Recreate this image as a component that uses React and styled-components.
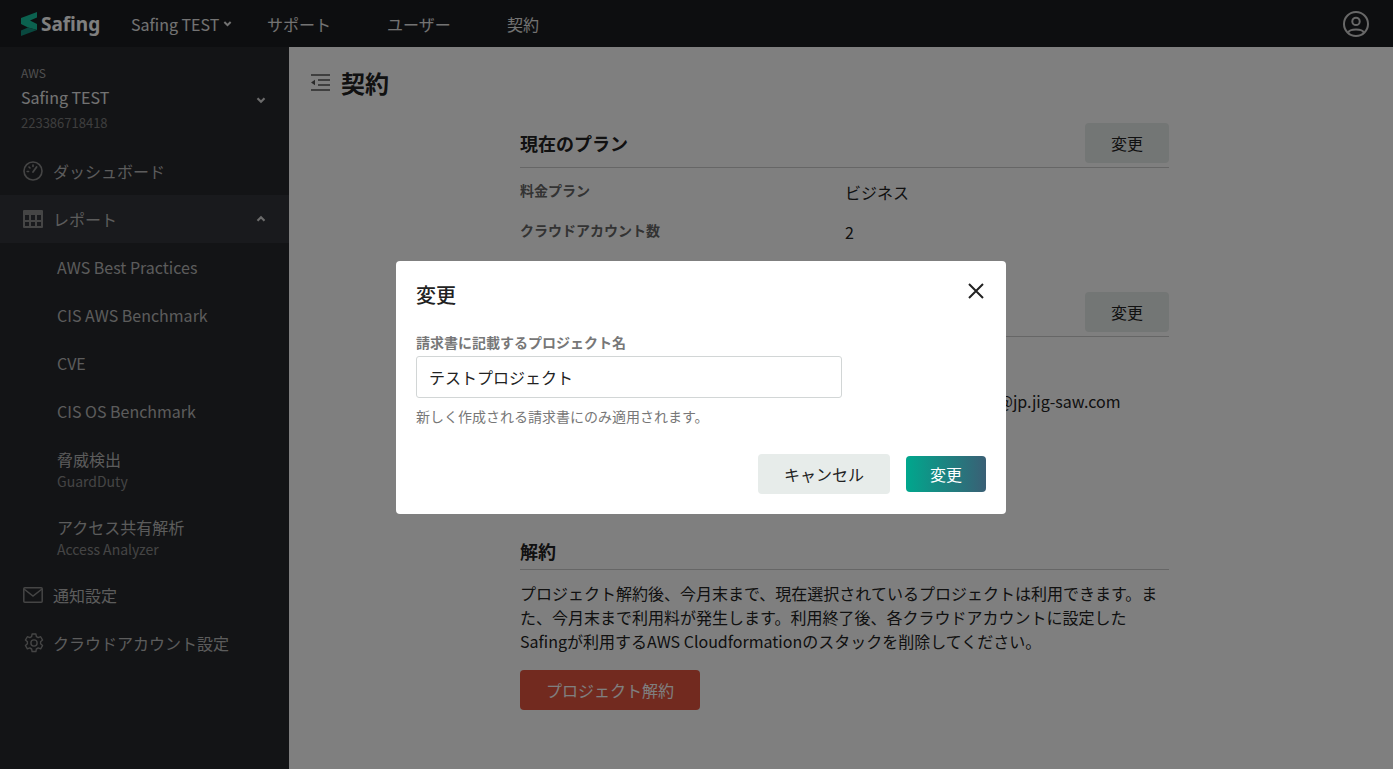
import React from "react";
import styled, { createGlobalStyle } from "styled-components";

const FONT = `"Noto Sans CJK JP", "Noto Sans", sans-serif`;

const GlobalStyle = createGlobalStyle`
  * {
    box-sizing: border-box;
  }
  html,
  body {
    margin: 0;
    height: 100%;
    overflow: hidden;
    background: #fff;
    font-family: ${FONT};
    color: #222;
  }
`;

function Logo() {
  return (
    <svg width="16" height="24" viewBox="0 0 16 24">
      <path d="M16 0 L16 5.5 L9 8.5 L16 12 L16 18 L7 15.5 L0 12 L0 6 Z" fill="#17c29e" />
      <path d="M0 18.5 L7 15.5 L16 18 L0 24 Z" fill="#12907e" />
    </svg>
  );
}

function Gauge() {
  return (
    <svg width="20" height="20" viewBox="0 0 20 20" fill="none" stroke="currentColor" strokeWidth="1.6">
      <circle cx="10" cy="10" r="9" />
      <path d="M10 11 L13.6 6" strokeLinecap="round" strokeWidth="1.8" />
      <path d="M4.2 10.5 H5.6 M6 6 L7 7 M10 4 V5.4" strokeLinecap="round" />
    </svg>
  );
}

function TableIcon() {
  return (
    <svg width="20" height="18" viewBox="0 0 20 18">
      <path
        fillRule="evenodd"
        fill="currentColor"
        d="M1 0 H19 A1 1 0 0 1 20 1 V17 A1 1 0 0 1 19 18 H1 A1 1 0 0 1 0 17 V1 A1 1 0 0 1 1 0 Z M2 5 V10 H6 V5 Z M8 5 V10 H12 V5 Z M14 5 V10 H18 V5 Z M2 12 V16 H6 V12 Z M8 12 V16 H12 V12 Z M14 12 V16 H18 V12 Z"
      />
    </svg>
  );
}

function Mail() {
  return (
    <svg width="20" height="16" viewBox="0 0 20 16" fill="none" stroke="currentColor" strokeWidth="1.5">
      <rect x="0.8" y="0.8" width="18.4" height="14.4" rx="1" />
      <path d="M1 2 L10 9 L19 2" />
    </svg>
  );
}

function Gear() {
  return (
    <svg width="22" height="22" viewBox="0 0 24 24" fill="none" stroke="currentColor" strokeWidth="1.5" strokeLinejoin="round">
      <path d="M9.9 2.2 h4.2 l.5 2.8 a7.6 7.6 0 0 1 2 1.15 l2.65-1 2.1 3.65-2.2 1.8 a7.6 7.6 0 0 1 0 2.3 l2.2 1.8-2.1 3.65-2.65-1 a7.6 7.6 0 0 1-2 1.15 l-.5 2.8 h-4.2 l-.5-2.8 a7.6 7.6 0 0 1-2-1.15 l-2.65 1-2.1-3.65 2.2-1.8 a7.6 7.6 0 0 1 0-2.3 l-2.2-1.8 2.1-3.65 2.65 1 a7.6 7.6 0 0 1 2-1.15 Z" />
      <circle cx="12" cy="12" r="3.4" />
    </svg>
  );
}

function Chevron({ up, size = 10 }) {
  return (
    <svg width={size} height={size} viewBox="0 0 10 10" fill="none" stroke="currentColor" strokeWidth="2.2">
      <path d={up ? "M1.5 6.8 L5 3.3 L8.5 6.8" : "M1.5 3.3 L5 6.8 L8.5 3.3"} />
    </svg>
  );
}

function UserCircle() {
  return (
    <svg width="26" height="26" viewBox="0 0 26 26" fill="none" stroke="currentColor" strokeWidth="2">
      <circle cx="13" cy="13" r="12" />
      <circle cx="13" cy="10.4" r="3.7" />
      <path d="M5.2 21.6 C7 17.6 19 17.6 20.8 21.6" />
    </svg>
  );
}

function Outdent() {
  return (
    <svg width="19" height="17" viewBox="0 0 19 17" fill="none" stroke="currentColor" strokeWidth="1.6">
      <path d="M0 1 H19 M7 6 H19 M7 11 H19 M0 16 H19" />
      <path d="M0 8.5 L4 5.8 V11.2 Z" fill="currentColor" stroke="none" />
    </svg>
  );
}

function CloseIcon() {
  return (
    <svg width="16" height="16" viewBox="0 0 16 16" fill="none" stroke="#222" strokeWidth="2">
      <path d="M1 1 L15 15 M15 1 L1 15" />
    </svg>
  );
}

const reports = [
  { name: "AWS Best Practices" },
  { name: "CIS AWS Benchmark" },
  { name: "CVE" },
  { name: "CIS OS Benchmark" },
  { name: "脅威検出", sub: "GuardDuty" },
  { name: "アクセス共有解析", sub: "Access Analyzer" },
];

export default function App() {
  return (
    <Page>
      <GlobalStyle />
      <TopBar>
        <Brand>
          <Logo />
          <BrandName>Safing</BrandName>
        </Brand>
        <ProjectMenu>
          Safing TEST
          <Chevron size={9} />
        </ProjectMenu>
        <TopLink>サポート</TopLink>
        <TopLink>ユーザー</TopLink>
        <TopLink>契約</TopLink>
        <UserButton>
          <UserCircle />
        </UserButton>
      </TopBar>
      <Body>
        <SideBar>
          <Account>
            <AccountType>AWS</AccountType>
            <AccountRow>
              <AccountName>Safing TEST</AccountName>
              <Chevron />
            </AccountRow>
            <AccountId>223386718418</AccountId>
          </Account>
          <NavItem>
            <NavIcon>
              <Gauge />
            </NavIcon>
            ダッシュボード
          </NavItem>
          <NavItem $active>
            <NavIcon>
              <TableIcon />
            </NavIcon>
            レポート
            <NavChevron>
              <Chevron up />
            </NavChevron>
          </NavItem>
          {reports.map((item) => (
            <SubItem key={item.name} $tall={!!item.sub}>
              <span>{item.name}</span>
              {item.sub && <SubCaption>{item.sub}</SubCaption>}
            </SubItem>
          ))}
          <NavItem>
            <NavIcon>
              <Mail />
            </NavIcon>
            通知設定
          </NavItem>
          <NavItem>
            <NavIcon>
              <Gear />
            </NavIcon>
            クラウドアカウント設定
          </NavItem>
        </SideBar>
        <Main>
          <TitleRow>
            <Outdent />
            <Title>契約</Title>
          </TitleRow>
          <Content>
            <SectionHead>
              <SectionTitle>現在のプラン</SectionTitle>
              <GrayButton>変更</GrayButton>
            </SectionHead>
            <PlanRows>
              <InfoRow>
                <InfoLabel>料金プラン</InfoLabel>
                <InfoValue>ビジネス</InfoValue>
              </InfoRow>
              <InfoRow>
                <InfoLabel>クラウドアカウント数</InfoLabel>
                <InfoValue>2</InfoValue>
              </InfoRow>
            </PlanRows>
            <SectionHead>
              <span />
              <GrayButton>変更</GrayButton>
            </SectionHead>
            <MailRow>
              <InfoLabel />
              <InfoValue>safing-billing-test-01@jp.jig-saw.com</InfoValue>
            </MailRow>
            <PlainHead>
              <SectionTitle>解約</SectionTitle>
            </PlainHead>
            <Notice>
              プロジェクト解約後、今月末まで、現在選択されているプロジェクトは利用できます。また、今月末まで利用料が発生します。利用終了後、各クラウドアカウントに設定したSafingが利用するAWS
              Cloudformationのスタックを削除してください。
            </Notice>
            <DangerButton>プロジェクト解約</DangerButton>
          </Content>
        </Main>
      </Body>
      <Overlay>
        <Modal>
          <ModalHead>
            <ModalTitle>変更</ModalTitle>
            <CloseButton>
              <CloseIcon />
            </CloseButton>
          </ModalHead>
          <FieldLabel>請求書に記載するプロジェクト名</FieldLabel>
          <TextInput readOnly value="テストプロジェクト" />
          <Hint>新しく作成される請求書にのみ適用されます。</Hint>
          <ModalFoot>
            <CancelButton>キャンセル</CancelButton>
            <SubmitButton>変更</SubmitButton>
          </ModalFoot>
        </Modal>
      </Overlay>
    </Page>
  );
}

const Page = styled.div`
  width: 100%;
  height: 100vh;
  display: flex;
  flex-direction: column;
  overflow: hidden;
`;
const TopBar = styled.header`
  height: 47px;
  flex: none;
  background: #1b1c20;
  color: #fff;
  display: flex;
  align-items: center;
  padding-left: 21px;
`;
const Brand = styled.div`
  display: flex;
  align-items: center;
  gap: 4px;
  width: 110px;
`;
const BrandName = styled.span`
  font-family: "Noto Sans", sans-serif;
  font-size: 19px;
  font-weight: 700;
  color: #fff;
`;
const ProjectMenu = styled.div`
  display: flex;
  align-items: center;
  gap: 4px;
  width: 136px;
  font-size: 16px;
  color: #e6e6e6;
`;
const TopLink = styled.div`
  width: 120px;
  font-size: 16px;
  color: #e6e6e6;
`;
const UserButton = styled.div`
  margin-left: auto;
  margin-right: 24px;
  display: flex;
  color: #d0d0d0;
`;
const Body = styled.div`
  flex: 1;
  display: flex;
  min-height: 0;
`;
const SideBar = styled.aside`
  width: 289px;
  flex: none;
  background: #27292d;
  color: #d6d6d6;
`;
const Account = styled.div`
  padding: 16px 21px 0;
  height: 100px;
`;
const AccountType = styled.div`
  font-size: 12px;
  line-height: 20px;
  color: #a0a0a0;
`;
const AccountRow = styled.div`
  display: flex;
  align-items: center;
  justify-content: space-between;
  padding-right: 2px;
  height: 28px;
  margin-bottom: 2px;
  font-size: 16px;
  svg {
    margin-top: 6px;
  }
`;
const AccountName = styled.span`
  color: #e6e6e6;
`;
const AccountId = styled.div`
  font-size: 13px;
  line-height: 20px;
  color: #7c7c7c;
`;
const NavItem = styled.div`
  height: 48px;
  display: flex;
  align-items: center;
  padding: 0 21px;
  font-size: 16px;
  color: #b8b8b8;
  background: ${(p) => (p.$active ? "#33353a" : "transparent")};
`;
const NavIcon = styled.span`
  width: 32px;
  flex: none;
  display: flex;
  align-items: center;
  padding-left: 2px;
  color: #8a8a8a;
`;
const NavChevron = styled.span`
  margin-left: auto;
  display: flex;
  padding-right: 2px;
  color: #d6d6d6;
`;
const SubItem = styled.div`
  height: ${(p) => (p.$tall ? "68px" : "48px")};
  padding-top: ${(p) => (p.$tall ? "1px" : "0")};
  display: flex;
  flex-direction: column;
  justify-content: center;
  padding-left: 57px;
  font-size: 16px;
  line-height: 22px;
  color: #b8b8b8;
`;
const SubCaption = styled.span`
  font-size: 14px;
  line-height: 22px;
  color: #8a8a8a;
`;
const Main = styled.main`
  flex: 1;
  min-width: 0;
  background: #fff;
`;
const TitleRow = styled.div`
  height: 70px;
  display: flex;
  align-items: center;
  gap: 11px;
  padding-left: 22px;
  color: #555;
`;
const Title = styled.h1`
  margin: 0;
  font-size: 24px;
  font-weight: 700;
  color: #222;
`;
const Content = styled.div`
  width: 649px;
  margin-left: 231px;
  padding-top: 6px;
`;
const SectionHead = styled.div`
  height: 45px;
  display: flex;
  align-items: flex-start;
  justify-content: space-between;
  border-bottom: 1px solid #ccc;
`;
const PlainHead = styled(SectionHead)`
  height: 33px;
  align-items: center;
  padding-bottom: 4px;
  margin-bottom: 11px;
`;
const SectionTitle = styled.h2`
  margin: 0;
  font-size: 18px;
  line-height: 40px;
  font-weight: 700;
  color: #222;
`;
const GrayButton = styled.button`
  width: 84px;
  height: 40px;
  border: none;
  border-radius: 4px;
  background: #e7ecea;
  color: #222;
  font-family: ${FONT};
  font-size: 16px;
`;
const PlanRows = styled.div`
  padding-top: 2px;
  margin-bottom: 42px;
`;
const InfoRow = styled.div`
  display: flex;
  height: 40px;
  align-items: center;
`;
const MailRow = styled(InfoRow)`
  margin-top: 42px;
  margin-bottom: 118px;
`;
const InfoLabel = styled.div`
  width: 325px;
  flex: none;
  font-size: 14px;
  font-weight: 700;
  color: #666;
`;
const InfoValue = styled.div`
  font-size: 16px;
  color: #222;
  position: relative;
  top: 2px;
`;
const Notice = styled.p`
  margin: 0 0 17px;
  font-size: 16px;
  line-height: 24px;
  color: #222;
`;
const DangerButton = styled.button`
  width: 180px;
  height: 40px;
  border: none;
  border-radius: 4px;
  background: #e4553f;
  color: #fff;
  font-family: ${FONT};
  font-size: 16px;
`;
const Overlay = styled.div`
  position: fixed;
  inset: 0;
  background: rgba(0, 0, 0, 0.5);
  display: flex;
  justify-content: center;
  padding-top: 261px;
`;
const Modal = styled.div`
  width: 610px;
  height: 253px;
  background: #fff;
  border-radius: 4px;
  padding: 20px;
  position: relative;
  left: 4.5px;
`;
const ModalHead = styled.div`
  height: 30px;
  display: flex;
  align-items: center;
  justify-content: space-between;
  margin-top: -2px;
  margin-bottom: 21px;
`;
const ModalTitle = styled.h3`
  margin: 0;
  font-size: 20px;
  font-weight: 500;
  color: #222;
`;
const CloseButton = styled.div`
  display: flex;
  margin-right: 2px;
  margin-top: -6px;
`;
const FieldLabel = styled.label`
  display: block;
  font-size: 14px;
  line-height: 24px;
  font-weight: 700;
  color: #777;
`;
const TextInput = styled.input`
  display: block;
  width: 426px;
  height: 42px;
  margin-top: 2px;
  padding: 0 12px;
  border: 1px solid #d2d6d6;
  border-radius: 3px;
  font-family: ${FONT};
  font-size: 16px;
  color: #222;
  outline: none;
`;
const Hint = styled.div`
  margin-top: 7px;
  font-size: 14px;
  line-height: 22px;
  color: #777;
`;
const ModalFoot = styled.div`
  display: flex;
  justify-content: flex-end;
  align-items: center;
  gap: 16px;
  margin-top: 27px;
`;
const CancelButton = styled.button`
  width: 132px;
  height: 40px;
  border: none;
  border-radius: 4px;
  background: #e7ecea;
  color: #222;
  font-family: ${FONT};
  font-size: 16px;
`;
const SubmitButton = styled.button`
  width: 80px;
  height: 36px;
  border: none;
  border-radius: 4px;
  background: linear-gradient(90deg, #00a78d, #3a5f75);
  color: #fff;
  font-family: ${FONT};
  font-size: 16px;
`;
